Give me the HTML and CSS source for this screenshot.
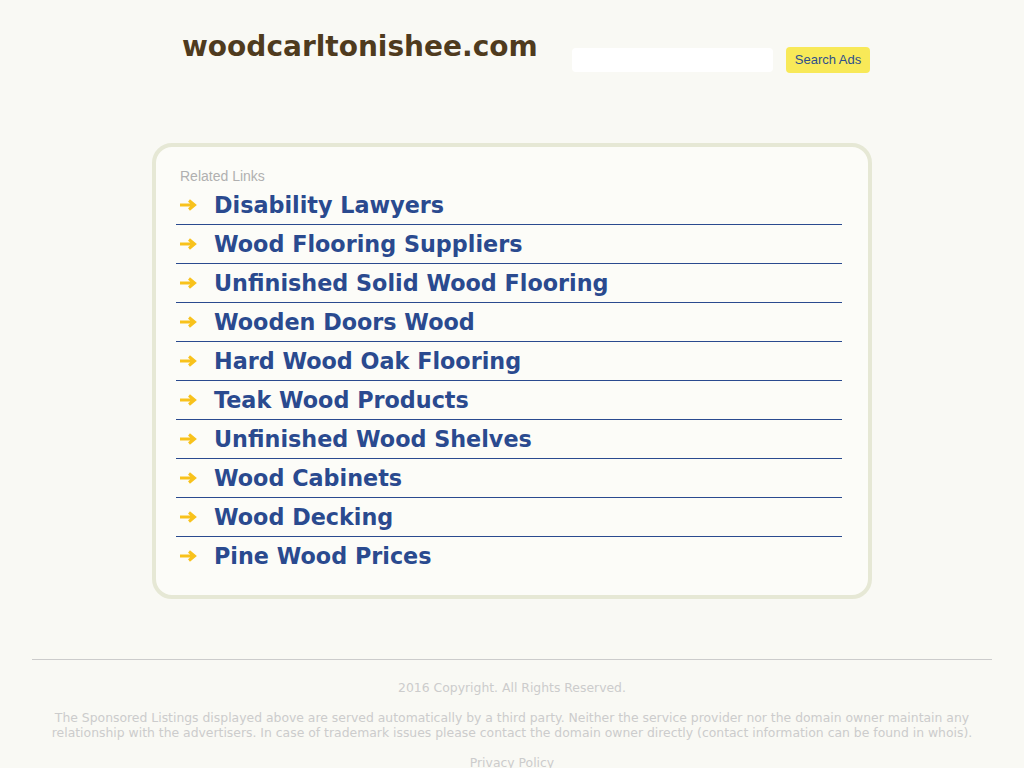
FILE: index.html
```html
<!DOCTYPE html>
<html>
<head>
<meta charset="utf-8">
<link rel="stylesheet" href="styles.css">
</head>
<body>
<div class="header">
  <div class="domain">woodcarltonishee.com</div>
  <form class="search">
    <input class="search-input" type="text">
    <button class="search-btn" type="button">Search Ads</button>
  </form>
</div>
<div class="box">
  <div class="related">Related Links</div>
  <ul class="links">
    <li><svg class="arrow" viewBox="0 0 18 12"><path d="M1 6H15M10 1.5L15.5 6L10 10.5"/></svg><a href="#">Disability Lawyers</a></li>
    <li><svg class="arrow" viewBox="0 0 18 12"><path d="M1 6H15M10 1.5L15.5 6L10 10.5"/></svg><a href="#">Wood Flooring Suppliers</a></li>
    <li><svg class="arrow" viewBox="0 0 18 12"><path d="M1 6H15M10 1.5L15.5 6L10 10.5"/></svg><a href="#">Unfinished Solid Wood Flooring</a></li>
    <li><svg class="arrow" viewBox="0 0 18 12"><path d="M1 6H15M10 1.5L15.5 6L10 10.5"/></svg><a href="#">Wooden Doors Wood</a></li>
    <li><svg class="arrow" viewBox="0 0 18 12"><path d="M1 6H15M10 1.5L15.5 6L10 10.5"/></svg><a href="#">Hard Wood Oak Flooring</a></li>
    <li><svg class="arrow" viewBox="0 0 18 12"><path d="M1 6H15M10 1.5L15.5 6L10 10.5"/></svg><a href="#">Teak Wood Products</a></li>
    <li><svg class="arrow" viewBox="0 0 18 12"><path d="M1 6H15M10 1.5L15.5 6L10 10.5"/></svg><a href="#">Unfinished Wood Shelves</a></li>
    <li><svg class="arrow" viewBox="0 0 18 12"><path d="M1 6H15M10 1.5L15.5 6L10 10.5"/></svg><a href="#">Wood Cabinets</a></li>
    <li><svg class="arrow" viewBox="0 0 18 12"><path d="M1 6H15M10 1.5L15.5 6L10 10.5"/></svg><a href="#">Wood Decking</a></li>
    <li><svg class="arrow" viewBox="0 0 18 12"><path d="M1 6H15M10 1.5L15.5 6L10 10.5"/></svg><a href="#">Pine Wood Prices</a></li>
  </ul>
</div>
<div class="footer">
  <p class="copy">2016 Copyright. All Rights Reserved.</p>
  <p class="disclaimer">The Sponsored Listings displayed above are served automatically by a third party. Neither the service provider nor the domain owner maintain any relationship with the advertisers. In case of trademark issues please contact the domain owner directly (contact information can be found in whois).</p>
  <p class="privacy"><a href="#">Privacy Policy</a></p>
</div>
</body>
</html>
```
FILE: styles.css
```css
html, body {
  margin: 0;
  padding: 0;
  background: #f9f9f4;
  font-family: "DejaVu Sans", sans-serif;
}
.header {
  width: 720px;
  margin: 0 auto;
  height: 143px;
  display: flex;
  align-items: flex-start;
  box-sizing: border-box;
  padding-left: 30px;
}
.domain {
  margin-top: 30px;
  font-size: 28px;
  font-weight: bold;
  color: #4f3b1e;
  line-height: 34px;
}
.search {
  display: flex;
  align-items: center;
  margin: 47px 0 0 auto;
  gap: 13px;
  padding-right: 2px;
}
.search-input {
  width: 201px;
  height: 24px;
  box-sizing: border-box;
  border: none;
  border-radius: 4px;
  background: #ffffff;
  margin: 0;
}
.search-btn {
  width: 84px;
  height: 26px;
  border: none;
  border-radius: 4px;
  background: #f8e958;
  color: #2e4f8c;
  font-family: "Liberation Sans", Arial, sans-serif;
  font-size: 13px;
  padding: 0 0 2px;
  margin: 0;
}
.box {
  width: 720px;
  box-sizing: border-box;
  margin: 0 auto;
  border: 4px solid #e6e8d5;
  border-radius: 20px;
  background: #fcfcf8;
  padding: 20px 26px 20px 20px;
}
.related {
  font-family: "Liberation Sans", Arial, sans-serif;
  font-size: 14px;
  color: #b0b0b0;
  padding-left: 4px;
  line-height: 18px;
  margin-bottom: 1px;
}
.links {
  list-style: none;
  margin: 0;
  padding: 0;
}
.links li {
  height: 38px;
  display: flex;
  align-items: center;
  border-bottom: 1px solid #2a4a8f;
}
.links li:last-child {
  border-bottom: none;
}
.arrow {
  width: 18px;
  height: 12px;
  margin: 0 17px 0 3px;
  fill: none;
  stroke: #f8c21c;
  stroke-width: 3;
}
.links a {
  color: #2a4a8f;
  font-size: 22.3px;
  font-weight: bold;
  text-decoration: none;
}
.footer {
  margin: 60px 32px 0;
  padding: 0 12px;
  border-top: 1px solid #cccccc;
  text-align: center;
  color: #cccccc;
  font-size: 12.4px;
  line-height: 15px;
}
.footer p {
  margin: 15px 0 0;
}
.footer .copy {
  margin-top: 20px;
}
.footer a {
  color: #cccccc;
  text-decoration: none;
}
```
